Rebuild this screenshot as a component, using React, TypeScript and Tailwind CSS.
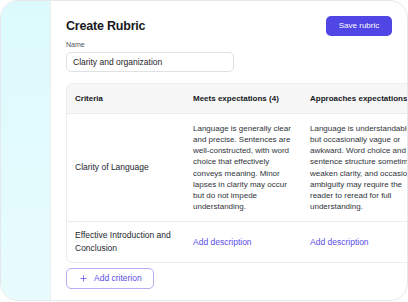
import React from 'react';
import { Plus } from 'lucide-react';

const columns = ['Criteria', 'Meets expectations (4)', 'Approaches expectations (3)', 'Below expectations (2)'];

const rows = [
    {
        name: 'Clarity of Language',
        cells: [
            'Language is generally clear and precise. Sentences are well-constructed, with word choice that effectively conveys meaning. Minor lapses in clarity may occur but do not impede understanding.',
            'Language is understandable but occasionally vague or awkward. Word choice and sentence structure sometimes weaken clarity, and occasional ambiguity may require the reader to reread for full understanding.',
            'Language is often unclear or imprecise, making the meaning difficult to follow.',
        ],
    },
    { name: 'Effective Introduction and Conclusion', cells: [null, null, null] },
];

// criteria | meets | approaches | below
const gridCols = 'grid grid-cols-[118px_117px_124px_128px]';

const App: React.FC = () => {
    return (
        <div className="w-[408px] h-[302px] bg-white text-[#1f2328]" style={{ fontFamily: '"Liberation Sans", Arial, sans-serif' }}>
            <div className="flex h-[301px] w-[408px] overflow-hidden rounded-[18px] border border-[#e5e7ea]">
                {/* Cyan side strip */}
                <div className="w-[49px] shrink-0 bg-gradient-to-b from-[#dcfafd] to-[#e8fbfd]" />

                {/* Main panel */}
                <div className="flex min-w-0 flex-1 flex-col border-l border-[#eceef0] pl-[15px] pr-[15px] pt-[15px]">
                    <div className="flex h-[20px] items-center justify-between">
                        <h1 className="text-[12.5px] font-bold leading-[16px] tracking-[-0.2px] text-[#16181c]">Create Rubric</h1>
                        <button className="h-[20px] w-[66px] rounded-[5px] bg-[#5046e5] text-[8px] text-white">
                            Save rubric
                        </button>
                    </div>

                    <label className="mt-[4px] text-[7px] leading-[9px] text-[#50545b]">Name</label>
                    <div className="mt-[3px] flex h-[20px] w-[168px] items-center rounded-[5px] border border-[#dfe1e5] px-[6px] text-[8.5px] text-[#1f2328]">
                        Clarity and organization
                    </div>

                    {/* Table */}
                    <div className="mt-[11px] w-[490px] shrink-0 overflow-hidden rounded-[6px] border border-[#ebecee]">
                        <div className={`${gridCols} h-[30px] items-center border-b border-[#ebecee] bg-[#f7f7f8]`}>
                            {columns.map((c) => (
                                <div key={c} className="whitespace-nowrap pl-[8px] text-[8px] font-bold text-[#16181c]">
                                    {c}
                                </div>
                            ))}
                        </div>
                        {rows.map((row, i) => (
                            <div key={row.name} className={`${gridCols} ${i === 0 ? 'border-b border-[#ebecee]' : ''}`}>
                                <div className="flex items-center pl-[8px] pr-[10px] text-[8.5px] leading-[13px] text-[#24272c]">
                                    {row.name}
                                </div>
                                {row.cells.map((cell, j) =>
                                    cell ? (
                                        <div key={j} className="py-[8.5px] pl-[8px] pr-[5px] text-[8px] leading-[11.25px] text-[#30343a]">
                                            {cell}
                                        </div>
                                    ) : (
                                        <div key={j} className="flex h-[40px] items-center pl-[8px] text-[8.5px] text-[#5a4ee6]">
                                            Add description
                                        </div>
                                    )
                                )}
                            </div>
                        ))}
                    </div>

                    <button className="mt-[5px] flex h-[21px] w-[88px] items-center gap-[6px] rounded-[5px] border border-[#b3adf3] pl-[12px] text-[8.5px] text-[#5a4ee6]">
                        <Plus size={9} strokeWidth={2} />
                        Add criterion
                    </button>
                </div>
            </div>
        </div>
    );
};

export default App;
